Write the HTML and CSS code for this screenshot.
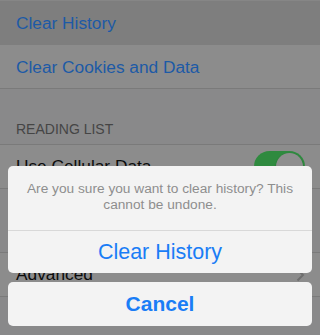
FILE: index.html
```html
<!DOCTYPE html>
<html>
<head>
<meta charset="utf-8">
<link rel="stylesheet" href="styles.css">
</head>
<body>
<div class="screen">
  <div class="group">
    <div class="row row-first row-active"><span class="link">Clear History</span></div>
    <div class="row row-last"><span class="link">Clear Cookies and Data</span></div>
  </div>
  <div class="section-header"><span>READING LIST</span></div>
  <div class="group group-bordered">
    <div class="row row-switch">
      <span class="label">Use Cellular Data</span>
      <span class="switch"><span class="knob"></span></span>
    </div>
  </div>
  <div class="section-gap"></div>
  <div class="group group-bordered">
    <div class="row row-switch">
      <span class="label">Advanced</span>
      <svg class="chevron" width="9" height="14" viewBox="0 0 9 14"><path d="M1.5 1.5 L7 7 L1.5 12.5" fill="none" stroke="#6e6e6e" stroke-width="2"/></svg>
    </div>
  </div>

  <div class="sheet">
    <div class="sheet-group">
      <div class="sheet-message">Are you sure you want to clear history? This cannot be undone.</div>
      <div class="sheet-button destructive">Clear History</div>
    </div>
    <div class="sheet-group sheet-cancel">
      <div class="sheet-button cancel">Cancel</div>
    </div>
  </div>
</div>
</body>
</html>
```

FILE: styles.css
```css
* { box-sizing: border-box; }
html, body { margin: 0; padding: 0; }
body {
  width: 320px;
  height: 335px;
  overflow: hidden;
  background: #8a8a8b;
  font-family: "Liberation Sans", Arial, sans-serif;
}
.screen {
  position: relative;
  width: 320px;
  height: 335px;
  overflow: hidden;
  background: #89898a;
}
.group { display: flex; flex-direction: column; }
.group-bordered { border-top: 1px solid #7a7a7a; border-bottom: 1px solid #7a7a7a; }
.row {
  display: flex;
  align-items: center;
  padding: 0 15px 0 16px;
  background: #8c8c8c;
  font-size: 17px;
}
.row-first { height: 45px; border-top: 1px solid #868686; padding-top: 1px; }
.row-active { background: #7e7e7e; }
.row-last { height: 44px; border-bottom: 1px solid #7a7a7a; padding-top: 1px; }
.link { color: #1d5aa6; font-size: 17.3px; }
.section-header {
  height: 55px;
  display: flex;
  align-items: flex-end;
  padding: 0 16px 7px;
  font-size: 14px;
  line-height: 16px;
  color: #454545;
}
.row-switch { height: 43px; justify-content: space-between; }
.label { color: #0c0c0c; font-size: 17.3px; }
.switch {
  position: relative;
  width: 51px;
  height: 31px;
  border-radius: 16px;
  background: #2f8a3f;
}
.knob {
  position: absolute;
  right: 2px;
  top: 2px;
  width: 27px;
  height: 27px;
  border-radius: 50%;
  background: #8e8e8e;
  box-shadow: 0 1px 2px rgba(0,0,0,0.25);
}
.chevron { margin-top: 1px; }
.section-gap { height: 63px; }

.sheet {
  position: absolute;
  left: 8px;
  right: 8px;
  bottom: 9px;
  display: flex;
  flex-direction: column;
  gap: 9px;
}
.sheet-group {
  background: #f3f3f3;
  border-radius: 5px;
  overflow: hidden;
}
.sheet-message {
  padding: 15px 14px 18px;
  font-size: 13.7px;
  line-height: 15.5px;
  text-align: center;
  color: #8e8e8e;
  border-bottom: 1px solid #d8d8d8;
}
.sheet-button {
  display: flex;
  align-items: center;
  justify-content: center;
  color: #1a7df6;
}
.destructive { height: 42px; font-size: 21.5px; }
.cancel { height: 44px; font-size: 21px; font-weight: bold; }
```
